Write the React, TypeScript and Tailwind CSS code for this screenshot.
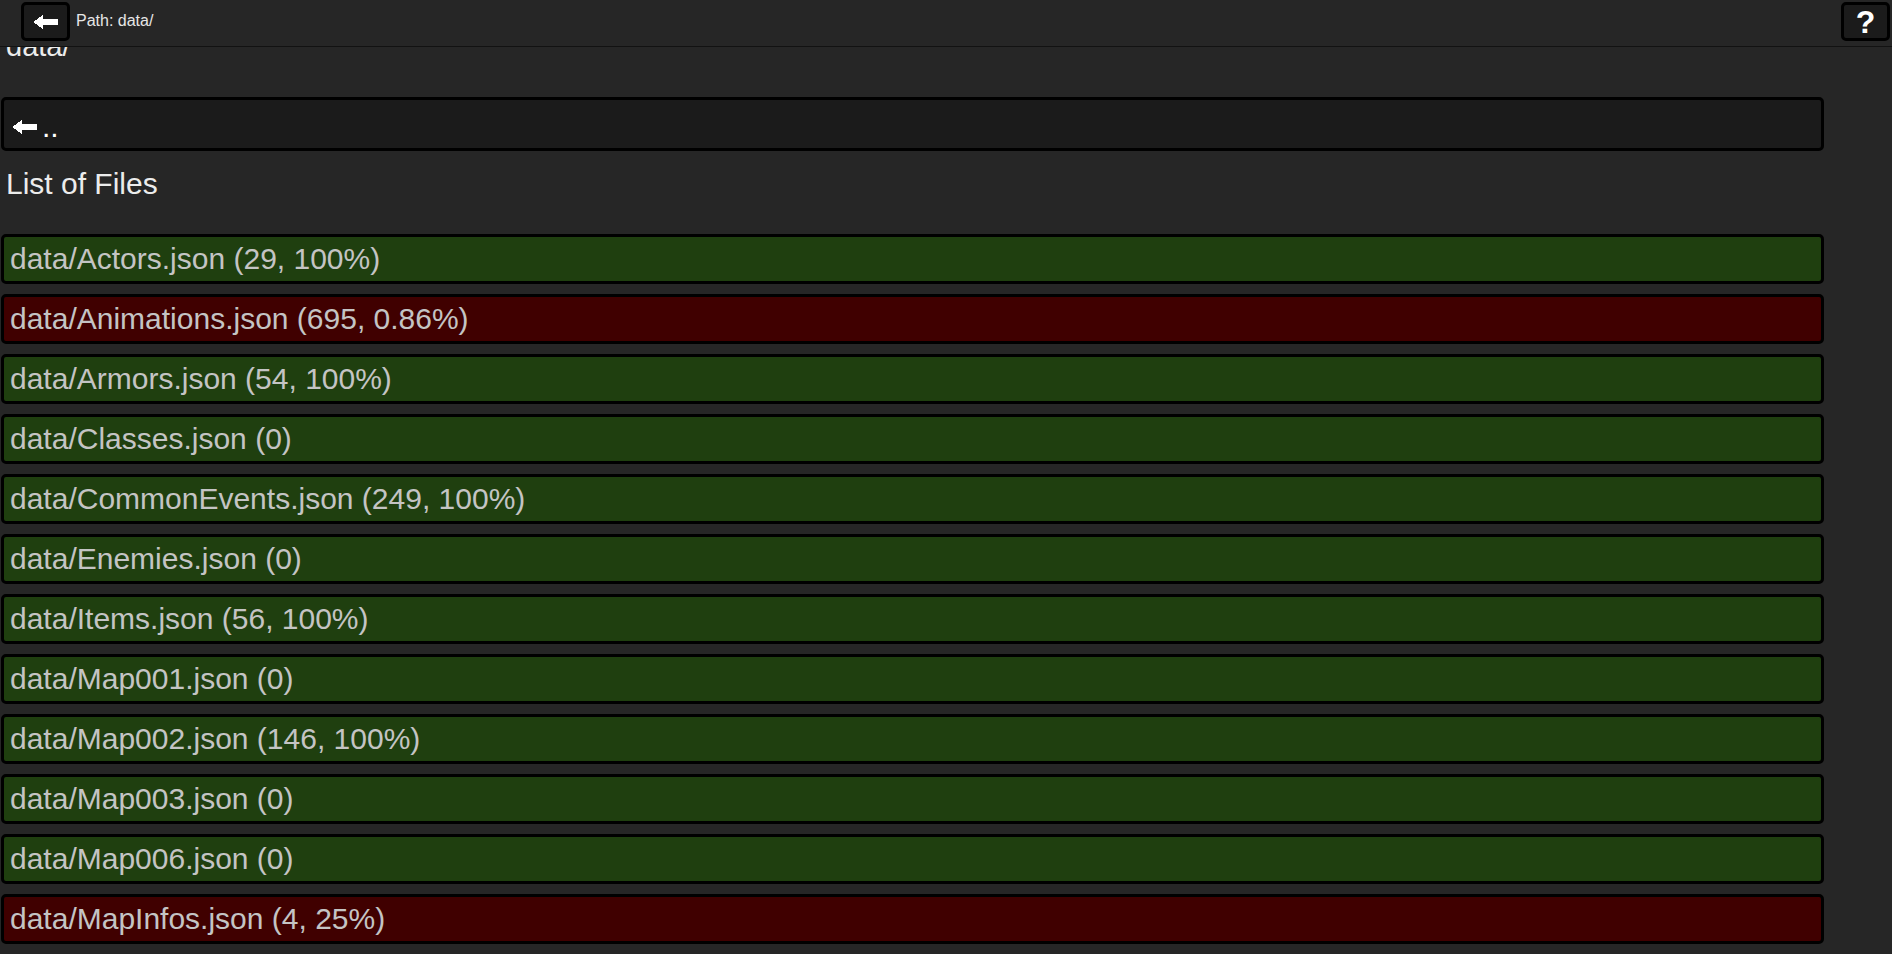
import React from "react";

interface FileEntry {
  name: string;
  info: string;
  ok: boolean;
}

const files: FileEntry[] = [
  { name: "data/Actors.json", info: "(29, 100%)", ok: true },
  { name: "data/Animations.json", info: "(695, 0.86%)", ok: false },
  { name: "data/Armors.json", info: "(54, 100%)", ok: true },
  { name: "data/Classes.json", info: "(0)", ok: true },
  { name: "data/CommonEvents.json", info: "(249, 100%)", ok: true },
  { name: "data/Enemies.json", info: "(0)", ok: true },
  { name: "data/Items.json", info: "(56, 100%)", ok: true },
  { name: "data/Map001.json", info: "(0)", ok: true },
  { name: "data/Map002.json", info: "(146, 100%)", ok: true },
  { name: "data/Map003.json", info: "(0)", ok: true },
  { name: "data/Map006.json", info: "(0)", ok: true },
  { name: "data/MapInfos.json", info: "(4, 25%)", ok: false },
];

function BackArrow() {
  return (
    <svg width="25" height="14" viewBox="0 0 25 14" shapeRendering="crispEdges">
      <polygon points="0,7 10,0 10,4 25,4 25,10 10,10 10,14" fill="#ffffff" />
    </svg>
  );
}

export default function App() {
  return (
    <div className="h-[954px] overflow-hidden bg-[#262626] font-['Liberation_Sans',Arial,sans-serif]">
      {/* top bar */}
      <header className="relative z-10 h-[47px] border-b border-[#121212] bg-[#262626] flex items-start">
        <button className="ml-[21px] mt-[2px] w-[49px] h-[39px] rounded-[5px] border-[3px] border-black bg-[#1b1b1b] flex items-center justify-center">
          <BackArrow />
        </button>
        <span className="ml-[6px] mt-[12px] text-[16px] leading-[18px] text-[#e6e6e6]">Path: data/</span>
        <div className="flex-1" />
        <button className="mr-[2px] mt-[2px] w-[49px] h-[39px] rounded-[5px] border-[3px] border-black bg-[#1b1b1b] flex items-center justify-center text-[32px] font-bold leading-none text-white">
          ?
        </button>
      </header>

      <main className="h-[907px] overflow-hidden">
        <div className="-mt-[17px] pl-[1px] pr-[68px]">
          <h2 className="pl-[5px] text-[29px] leading-[33px] text-[#ececec] mb-[34px]">data/</h2>

          <div className="h-[54px] rounded-[5px] border-[3px] border-black bg-[#1b1b1b] flex items-start pl-[8px] pt-[10px]">
            <span className="mt-[10px]">
              <BackArrow />
            </span>
            <span className="ml-[5px] text-[30px] leading-[34px] text-white">..</span>
          </div>

          <h2 className="pl-[5px] mt-[15px] mb-[33px] text-[30px] leading-[35px] text-[#ececec]">List of Files</h2>

          <div className="flex flex-col gap-[10px]">
            {files.map((f) => (
              <div
                key={f.name}
                className={`h-[50px] rounded-[5px] border-[3px] border-black px-[6px] flex items-center text-[30px] leading-[34px] text-[#c4c4c4] ${
                  f.ok ? "bg-[#1f3f0f]" : "bg-[#400000]"
                }`}
              >
                {f.name} {f.info}
              </div>
            ))}
          </div>
        </div>
      </main>
    </div>
  );
}
